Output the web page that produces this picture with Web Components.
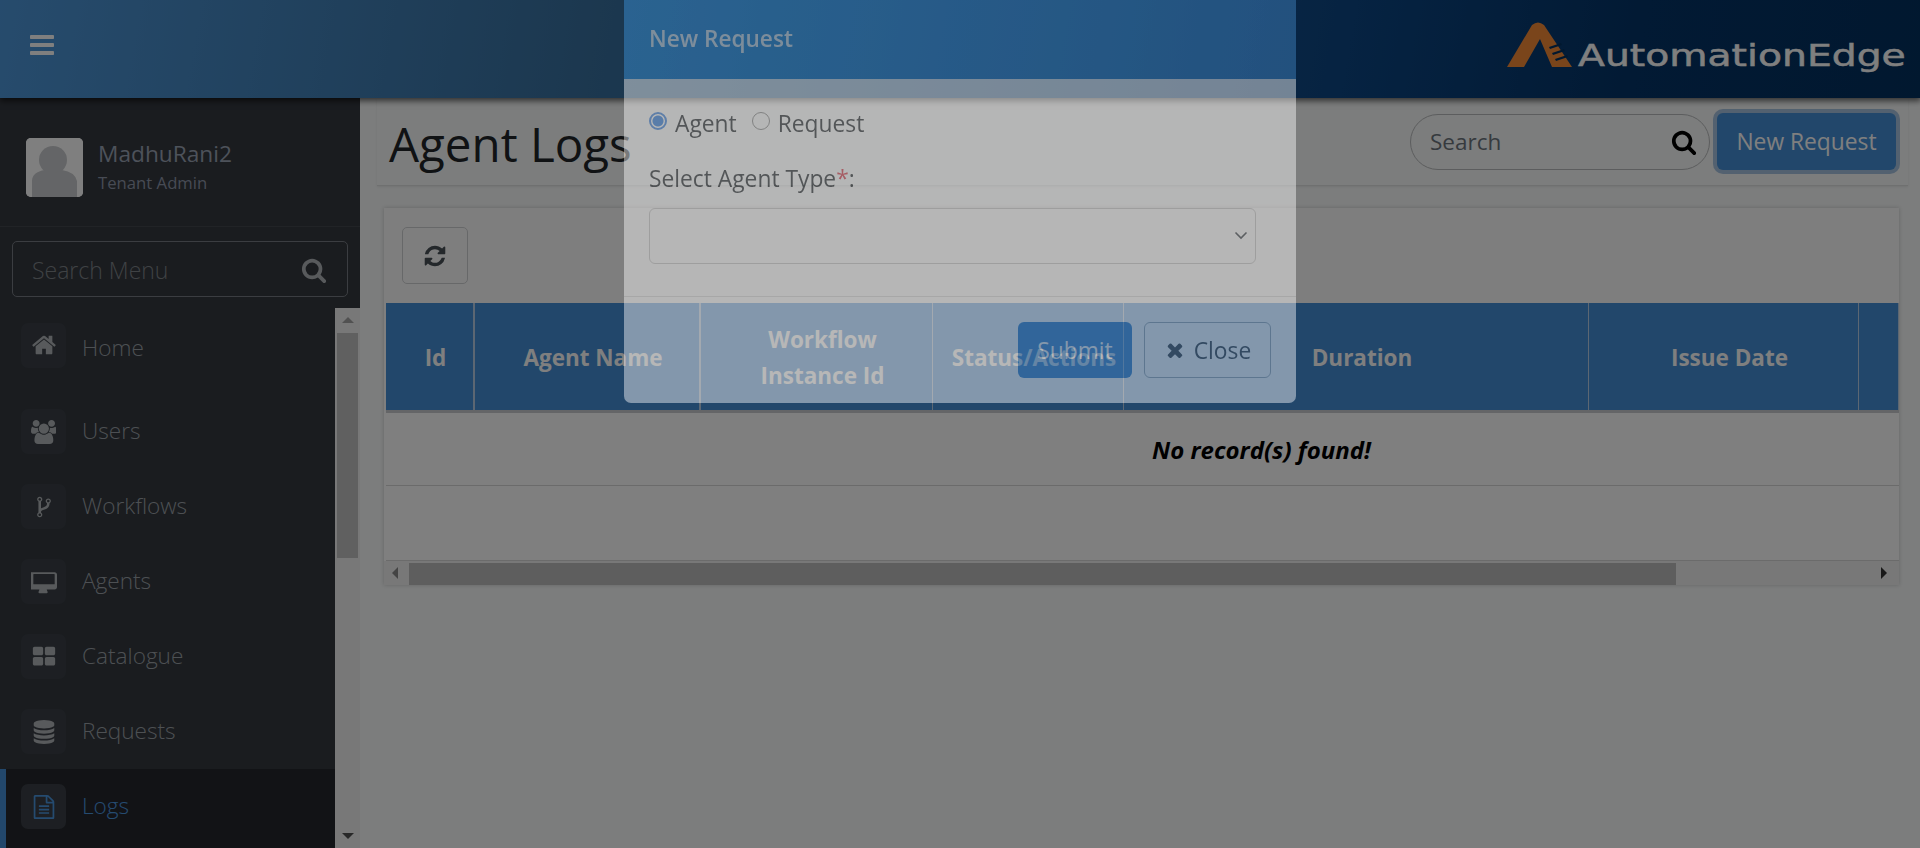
<!DOCTYPE html>
<html lang="en"><head><meta charset="utf-8"><title>Agent Logs</title>
<style>
html,body{margin:0;height:848px;overflow:hidden}
body{font-family:"Open Sans","Noto Sans",sans-serif;background:#f8fafa;color:#212529}
</style></head>
<body>
<app-shell>
  <top-bar slot="top"></top-bar>
  <side-nav slot="side"></side-nav>
  <log-page slot="main"></log-page>
</app-shell>
<modal-dialog heading="New Request"></modal-dialog>
<script>
const P={
bars:[1792,"M1664 1344v128q0 26-19 45t-45 19h-1408q-26 0-45-19t-19-45v-128q0-26 19-45t45-19h1408q26 0 45 19t19 45zm0-512v128q0 26-19 45t-45 19h-1408q-26 0-45-19t-19-45v-128q0-26 19-45t45-19h1408q26 0 45 19t19 45zm0-512v128q0 26-19 45t-45 19h-1408q-26 0-45-19t-19-45v-128q0-26 19-45t45-19h1408q26 0 45 19t19 45z"],
search:[1792,"M1216 832q0-185-131.500-316.500t-316.500-131.500-316.500 131.500-131.500 316.500 131.500 316.500 316.500 131.500 316.500-131.500 131.500-316.500zm512 832q0 52-38 90t-90 38q-54 0-90-38l-343-342q-179 124-399 124-143 0-273.500-55.500t-225-150-150-225-55.500-273.500 55.500-273.500 150-225 225-150 273.500-55.500 273.500 55.500 225 150 150 225 55.500 273.500q0 220-124 399l343 343q37 37 37 90z"],
home:[1792,"M1472 992v480q0 26-19 45t-45 19h-384v-384h-256v384h-384q-26 0-45-19t-19-45v-480q0-1 .5-3t.5-3l575-474 575 474q1 2 1 6zm223-69l-62 74q-8 9-21 11h-3q-13 0-21-7l-692-577-692 577q-12 8-24 7-13-2-21-11l-62-74q-8-10-7-23.500t11-21.500l719-599q32-26 76-26t76 26l244 204v-195q0-14 9-23t23-9h192q14 0 23 9t9 23v408l219 182q10 8 11 21.500t-7 23.500z"],
users:[1920,"M593 896q-162 5-265 128h-134q-82 0-138-40.500t-56-118.500q0-353 124-353 6 0 43.500 21t97.500 42.500 119 21.500q67 0 133-23-5 37-5 66 0 139 81 256zm1071 637q0 120-73 189.500t-194 69.500h-874q-121 0-194-69.500t-73-189.500q0-53 3.500-103.500t14-109 26.500-108.500 43-97.500 62-81 85.500-53.500 111.500-20q10 0 43 21.500t73 48 107 48 135 21.500 135-21.500 107-48 73-48 43-21.500q61 0 111.500 20t85.500 53.500 62 81 43 97.500 26.500 108.500 14 109 3.500 103.500zm-1024-1277q0 106-75 181t-181 75-181-75-75-181 75-181 181-75 181 75 75 181zm704 384q0 159-112.500 271.500t-271.500 112.500-271.500-112.500-112.500-271.500 112.500-271.500 271.500-112.500 271.500 112.500 112.500 271.500zm576 225q0 78-56 118.500t-138 40.500h-134q-103-123-265-128 81-117 81-256 0-29-5-66 66 23 133 23 59 0 119-21.500t97.500-42.500 43.500-21q124 0 124 353zm-128-609q0 106-75 181t-181 75-181-75-75-181 75-181 181-75 181 75 75 181z"],
fork:[1792,"M672 1472q0-40-28-68t-68-28-68 28-28 68 28 68 68 28 68-28 28-68zm0-1152q0-40-28-68t-68-28-68 28-28 68 28 68 68 28 68-28 28-68zm640 128q0-40-28-68t-68-28-68 28-28 68 28 68 68 28 68-28 28-68zm96 0q0 52-26 96.500t-70 69.500q-2 287-226 414-67 38-203 81-128 40-169.500 71t-41.500 100v26q44 25 70 69.500t26 96.500q0 80-56 136t-136 56-136-56-56-136q0-52 26-96.500t70-69.500v-820q-44-25-70-69.500t-26-96.500q0-80 56-136t136-56 136 56 56 136q0 52-26 96.500t-70 69.500v497q54-26 154-57 55-17 87.500-29.500t70.500-31 59-39.500 40.500-51 28-69.500 8.500-91.500q-44-25-70-69.500t-26-96.500q0-80 56-136t136-56 136 56 56 136z"],
desktop:[1792,"M160 224h1472q66 0 113 47t47 113v864q0 66-47 113t-113 47h-544q0 37 16 77.500t32 71 16 43.500q0 26-19 45t-45 19h-512q-26 0-45-19t-19-45q0-14 16-44t32-70 16-78h-544q-66 0-113-47t-47-113v-864q0-66 47-113t113-47zM160 384v640q0 13 9.500 22.500t22.500 9.500h1408q13 0 22.500-9.500t9.500-22.500v-640q0-13-9.500-22.500t-22.500-9.500h-1408q-13 0-22.500 9.500t-9.500 22.500z"],
grid:[1792,"M832 1024v384q0 52-38 90t-90 38h-512q-52 0-90-38t-38-90v-384q0-52 38-90t90-38h512q52 0 90 38t38 90zm0-768v384q0 52-38 90t-90 38h-512q-52 0-90-38t-38-90v-384q0-52 38-90t90-38h512q52 0 90 38t38 90zm896 768v384q0 52-38 90t-90 38h-512q-52 0-90-38t-38-90v-384q0-52 38-90t90-38h512q52 0 90 38t38 90zm0-768v384q0 52-38 90t-90 38h-512q-52 0-90-38t-38-90v-384q0-52 38-90t90-38h512q52 0 90 38t38 90z"],
db:[1792,"M896 768q237 0 443-43t325-127v170q0 69-103 128t-280 93.500-385 34.500-385-34.500-280-93.500-103-128v-170q119 84 325 127t443 43zm0 768q237 0 443-43t325-127v170q0 69-103 128t-280 93.500-385 34.500-385-34.500-280-93.500-103-128v-170q119 84 325 127t443 43zm0-384q237 0 443-43t325-127v170q0 69-103 128t-280 93.500-385 34.500-385-34.500-280-93.500-103-128v-170q119 84 325 127t443 43zm0-1152q208 0 385 34.500t280 93.500 103 128v128q0 69-103 128t-280 93.500-385 34.500-385-34.500-280-93.500-103-128v-128q0-69 103-128t280-93.500 385-34.500z"],
file:[1792,"M1596 380q28 28 48 76t20 88v1152q0 40-28 68t-68 28h-1344q-40 0-68-28t-28-68v-1600q0-40 28-68t68-28h896q40 0 88 20t76 48zm-444-244v376h376q-10-29-22-41l-313-313q-12-12-41-22zm384 1528v-1024h-416q-40 0-68-28t-28-68v-416h-768v1536h1280zm-1024-864q0-14 9-23t23-9h704q14 0 23 9t9 23v64q0 14-9 23t-23 9h-704q-14 0-23-9t-9-23v-64zm736 224q14 0 23 9t9 23v64q0 14-9 23t-23 9h-704q-14 0-23-9t-9-23v-64q0-14 9-23t23-9h704zm0 256q14 0 23 9t9 23v64q0 14-9 23t-23 9h-704q-14 0-23-9t-9-23v-64q0-14 9-23t23-9h704z"],
refresh:[1792,"M1639 1056q0 5-1 7-64 268-268 434.500t-478 166.500q-146 0-282.500-55t-243.500-157l-129 129q-19 19-45 19t-45-19-19-45v-448q0-26 19-45t45-19h448q26 0 45 19t19 45-19 45l-137 137q71 66 161 102t187 36q134 0 250-65t186-179q11-17 53-117 8-23 30-23h192q13 0 22.500 9.500t9.500 22.500zm25-800v448q0 26-19 45t-45 19h-448q-26 0-45-19t-19-45 19-45l138-138q-148-137-349-137-134 0-250 65t-186 179q-11 17-53 117-8 23-30 23h-199q-13 0-22.500-9.500t-9.500-22.500v-7q65-268 270-434.500t480-166.500q146 0 284 55.500t245 156.500l130-129q19-19 45-19t45 19 19 45z"],
times:[1792,"M1490 1322q0 40-28 68l-136 136q-28 28-68 28t-68-28l-294-294-294 294q-28 28-68 28t-68-28l-136-136q-28-28-28-68t28-68l294-294-294-294q-28-28-28-68t28-68l136-136q28-28 68-28t68 28l294 294 294-294q28-28 68-28t68 28l136 136q28 28 28 68t-28 68l-294 294 294 294q28 28 28 68z"]
};
function el(name,html){customElements.define(name,class extends HTMLElement{
  constructor(){super();const r=this.attachShadow({mode:"open"});r.innerHTML=typeof html==="function"?html(this):html;}
});}
customElements.define("fa-icon",class extends HTMLElement{
  connectedCallback(){if(this.shadowRoot)return;const p=P[this.getAttribute("name")],s=this.getAttribute("size")||16;
    this.attachShadow({mode:"open"}).innerHTML=`<style>:host{display:inline-flex}svg{display:block;fill:currentColor}</style><svg width="${s*p[0]/1792}" height="${s}" viewBox="0 0 ${p[0]} 1792"><path d="${p[1]}"/></svg>`;}
});
el("app-shell",`<style>
:host{display:grid;grid-template-columns:360px 1fr;grid-template-rows:98px 750px;width:1920px;height:848px;overflow:hidden}
.t{grid-column:1/3;grid-row:1;z-index:2;display:block}
.s{grid-row:2;min-height:0;display:block}.m{grid-row:2;min-height:0;display:block}
</style><slot class="t" name="top"></slot><slot class="s" name="side"></slot><slot class="m" name="main"></slot>`);
el("top-bar",`<style>
:host{display:flex;align-items:center;justify-content:space-between;height:98px;color:#fff;background:linear-gradient(100deg,#4d97da 0%,#38709f 31%,#0c4684 70%,#043468 85%,#03305f 100%);box-shadow:0 3px 6px rgba(0,0,0,.6);position:relative;padding:0 15px 8px 28px;box-sizing:border-box}
.logo{display:flex;align-items:flex-end;gap:6px;height:46px;margin-top:-2px}
.name{font:400 30px/30px "DejaVu Sans",sans-serif;-webkit-text-stroke:.5px #fff;color:#fff;display:block;transform:scaleX(1.31);transform-origin:left bottom;width:328px;white-space:nowrap;margin-bottom:-4px}
svg{display:block}
</style>
<fa-icon name="bars" size="28"></fa-icon>
<div class="logo"><svg width="65" height="45" viewBox="0 0 65 45"><path fill="#f58a37" d="M0 45 25 3q6-5 12 0l28 42H45L33 17 17 45z"/><path fill="#03305f" d="M42 25l12-4 1 2-12 4zM45 31l12-4 1 2-12 4zM48 37l12-4 1 2-12 4z"/></svg><span class="name">AutomationEdge</span></div>`);
el("nav-item",h=>`<style>
:host{display:flex;flex:none;align-items:center;gap:16px;height:var(--h,75px);box-sizing:border-box;padding-left:21px;color:#9aa0a6;font-weight:300;font-size:22.6px;position:relative}
:host([active]){background:#24272c;color:#4b97e0;box-shadow:inset 6px 0 0 #448ed6}
.i{width:45px;height:45px;border-radius:7px;background:#3a3f46;display:flex;align-items:center;justify-content:center;color:#b0b4b8;flex:none}
:host([active]) .i{color:#4b97e0}
.l{margin-top:var(--ly,-2px)}
</style><span class="i"><fa-icon name="${h.getAttribute("icon")}" size="${h.getAttribute("isize")||26}"></fa-icon></span><span class="l">${h.getAttribute("label")}</span>`);
el("side-nav",`<style>
:host{display:flex;flex-direction:column;height:750px;background:#34383f;color:#b6bcc2}
.user{height:129px;box-sizing:border-box;border-bottom:1px solid #42464d;display:flex;align-items:center;gap:15px;padding:0 0 0 26px;flex:none}
.av{width:57px;height:59px;border-radius:5px;background:#fff;overflow:hidden;flex:none;margin-top:10px}
.nm{font-size:22.7px;line-height:30px;font-weight:400;color:#9ba4b4;margin-top:12px}.rl{font-size:16.7px;line-height:28px;color:#8e96a8}
.search{flex:none;margin:14px 12px 11px;height:56px;border:1px solid #777b82;border-radius:5px;box-sizing:border-box;display:flex;align-items:center;justify-content:space-between;padding:2px 20px 0 19px;color:#7f8489;font-size:23px;font-weight:300}
.search fa-icon{color:#b0b4b8}
.wrap{flex:1;min-height:0;display:flex;overflow:hidden}
.list{flex:1;min-width:0;display:flex;flex-direction:column}
.bar{width:25px;flex:none;background:#f1f1f1;display:flex;flex-direction:column;align-items:center;justify-content:space-between;padding:9px 0;box-sizing:border-box;position:relative}
.th{position:absolute;left:2px;right:2px;top:25px;height:225px;background:#c1c1c1}
i{width:0;height:0;border-left:6px solid transparent;border-right:6px solid transparent;display:block}
.u{border-bottom:6px solid #a3a3a3}.d{border-top:6px solid #505050}
</style>
<div class="user"><div class="av"><svg width="57" height="59" viewBox="0 0 57 59"><rect width="57" height="59" fill="#fff"/><circle cx="27" cy="22" r="14" fill="#c9cbce"/><path d="M6 59V43q0-9 13-11 8 5 17 0 13 2 15 11v16z" fill="#c9cbce"/></svg></div><div><div class="nm">MadhuRani2</div><div class="rl">Tenant Admin</div></div></div>
<div class="search"><span>Search Menu</span><fa-icon name="search" size="26"></fa-icon></div>
<div class="wrap"><div class="list">
<nav-item icon="home" label="Home" style="--h:86px;padding-bottom:12px;--ly:4px"></nav-item>
<nav-item icon="users" label="Users" isize="24"></nav-item>
<nav-item icon="fork" label="Workflows" isize="24"></nav-item>
<nav-item icon="desktop" label="Agents"></nav-item>
<nav-item icon="grid" label="Catalogue" isize="24"></nav-item>
<nav-item icon="db" label="Requests" isize="24"></nav-item>
<nav-item icon="file" label="Logs" active isize="24" style="--h:79px;padding-bottom:4px"></nav-item>
</div><div class="bar"><i class="u"></i><span class="th"></span><i class="d"></i></div></div>`);
el("page-head",`<style>
:host{display:flex;align-items:center;justify-content:space-between;height:88px;box-sizing:border-box;margin:0 13px 0 17px;padding:0 12px 0 12px;border-bottom:1px solid #dfe1e1;background:#f8fafa;box-shadow:0 1px 2px rgba(0,0,0,.08)}
h1{margin:0;font-size:47.5px;font-weight:500;color:#212529;line-height:1;margin-top:4px}
.r{display:flex;align-items:center;gap:7px}
.s{width:300px;height:56px;border:1px solid #b8babc;border-radius:28px;box-sizing:border-box;display:flex;align-items:center;justify-content:space-between;padding:0 12px 0 19px;color:#6c757d;font-size:22.5px;font-weight:400}
.s fa-icon{color:#000}
.b{height:57px;width:179px;box-sizing:border-box;border-radius:6px;background:#448ed6;color:#fff;font-size:22.8px;display:flex;align-items:center;justify-content:center;box-shadow:0 0 0 4px #a6c3e0}
</style><h1>Agent Logs</h1><div class="r"><div class="s"><span>Search</span><fa-icon name="search" size="26"></fa-icon></div><div class="b">New Request</div></div>`);
el("data-table",`<style>
:host{margin:22px 22px 0 24px;background:#fff;box-shadow:0 0 4px rgba(0,0,0,.2);height:377px;overflow:hidden;display:flex;flex-direction:column;color:#000}
.tb{height:95px;flex:none;box-sizing:border-box;padding:19px 18px;background:#fdfdfd}
.rf{width:66px;height:57px;border:1px solid #cfd1d3;border-radius:5px;box-sizing:border-box;display:flex;align-items:center;justify-content:center;color:#495057}
.t{margin-left:2px;flex:none;overflow:hidden}
.h{display:grid;grid-template-columns:89px 226px 232px 191px 465px 270px 40px;height:110px;background:#448ed6;border-bottom:3px solid #c8cace;box-sizing:border-box}
.h div{display:flex;align-items:center;justify-content:center;text-align:center;font-weight:700;font-size:22.5px;line-height:36px;color:#fff;border-right:1px solid #b9cfe6;padding:2px 0 0 12px;box-sizing:border-box}
.h div:nth-child(1),.h div:nth-child(2){border-right-width:2px}
.e{height:73px;display:flex;align-items:center;justify-content:center;border-bottom:1px solid #d6d6d6;font:italic 700 24px "Open Sans",sans-serif;box-sizing:border-box;padding-left:238px}
.f{height:75px;border-bottom:1px solid #d6d6d6;box-sizing:border-box}
.sb{flex:1;background:#f1f1f1;display:flex;align-items:center;position:relative}
.th{position:absolute;left:25px;top:2px;bottom:0;width:1267px;background:#bcbcbc}
i{position:absolute;width:0;height:0;border-top:6px solid transparent;border-bottom:6px solid transparent;top:6px}
.l{left:8px;border-right:6px solid #888}.g{right:12px;border-left:6px solid #333}
</style>
<div class="tb"><div class="rf"><fa-icon name="refresh" size="24"></fa-icon></div></div>
<div class="t"><div class="h"><div>Id</div><div>Agent Name</div><div>Workflow<br>Instance Id</div><div>Status/Actions</div><div>Duration</div><div>Issue Date</div><div></div></div>
<div class="e">No record(s) found!</div><div class="f"></div></div>
<div class="sb"><i class="l"></i><span class="th"></span><i class="g"></i></div>`);
el("log-page",`<style>:host{display:block;height:750px;background:#f8fafa;overflow:hidden}</style><page-head></page-head><data-table></data-table>`);
el("modal-dialog",h=>`<style>
:host{position:fixed;inset:0;z-index:10;background:rgba(0,0,0,.5);display:flex;justify-content:center;align-items:flex-start}
.p{width:672px;height:403px;background:#fff;opacity:.44;border-radius:0 0 7px 7px;display:flex;flex-direction:column;overflow:hidden;color:#212529;font-size:22.8px}
.hd{height:79px;flex:none;box-sizing:border-box;padding:0 25px 2px;display:flex;align-items:center;background:linear-gradient(100deg,#3f9ce5,#478bca);color:#fff;font-weight:600;font-size:22.6px}
.bd{height:218px;flex:none;box-sizing:border-box;padding:27px 25px 0;border-bottom:1px solid #ddd}
.rd{display:flex;align-items:center;height:34px}
.o{width:18px;height:18px;border:1px solid #888;border-radius:50%;box-sizing:border-box;background:#fff;margin:-5px 8px 0 0;flex:none}
.o.on{border:2px solid #3b82e0;background:radial-gradient(circle,#2f7de1 0 5px,#fff 6px)}
.rd span:nth-child(2){margin-right:15px}
.lb{margin-top:22px;line-height:34px;height:34px}.lb b{color:#dc3545;font-weight:400}
.sl{margin-top:12px;width:607px;height:56px;border:1px solid #c9c9c9;border-radius:6px;box-sizing:border-box;display:flex;align-items:center;justify-content:flex-end;padding:0 6px 2px 0;color:#343a40}
.ft{flex:1;display:flex;justify-content:flex-end;gap:12px;padding:25px 25px 0;box-sizing:border-box}
.b{height:56px;box-sizing:border-box;border-radius:6px;display:flex;align-items:center;justify-content:center;gap:8px}
.a{width:114px;background:#448ed6;color:#fff}.c{width:127px;border:1px solid #a9b4bd;color:#495057}
</style>
<div class="p"><div class="hd">${h.getAttribute("heading")}</div>
<div class="bd"><div class="rd"><span class="o on"></span><span>Agent</span><span class="o"></span><span>Request</span></div>
<div class="lb">Select Agent Type<b>*</b>:</div>
<div class="sl"><svg width="16" height="16" viewBox="0 0 16 16"><path d="M2.500 5.500l5.500 5.500 5.500-5.500" fill="none" stroke="currentColor" stroke-width="1.600"/></svg></div></div>
<div class="ft"><div class="b a">Submit</div><div class="b c"><fa-icon name="times" size="22"></fa-icon>Close</div></div></div>`);
</script>
</body></html>
